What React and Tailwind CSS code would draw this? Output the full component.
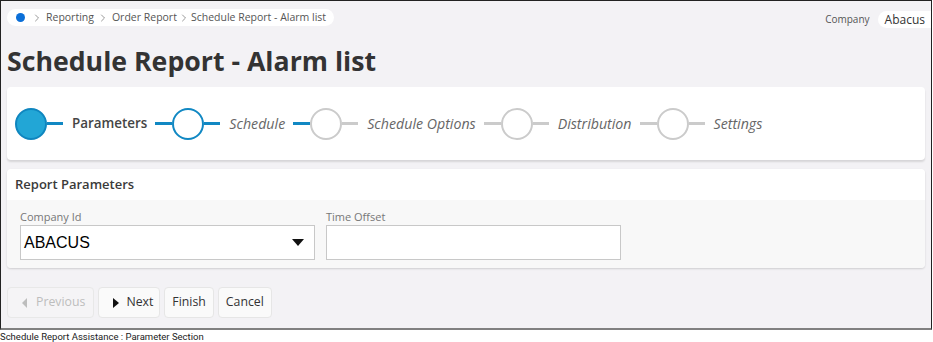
import { ChevronRight } from 'lucide-react';

const Step = ({ label, state, last }) => {
    const done = state === 'active';
    const blue = state !== 'todo';
    return (
        <div className="flex items-center">
            <div
                className={
                    done
                        ? 'w-8 h-8 rounded-full bg-[#22a6d6] border-2 border-[#0f86bf]'
                        : blue
                        ? 'w-8 h-8 rounded-full bg-white border-2 border-[#1188c3]'
                        : 'w-8 h-8 rounded-full bg-white border-2 border-[#cbcbcb]'
                }
            />
            <div className={blue ? 'w-4 h-[3px] bg-[#1188c3]' : 'w-4 h-[3px] bg-[#cbcbcb]'} />
            <span
                className={
                    done
                        ? 'ml-[9px] text-[13.4px] font-semibold text-[#454545]'
                        : 'ml-[9px] text-[14.2px] italic text-[#666]'
                }
            >
                {label}
            </span>
            {!last && (
                <div
                    className={
                        state === 'todo' || label === 'Schedule Options'
                            ? 'ml-2 w-[17px] h-[3px] bg-[#cbcbcb]'
                            : 'ml-2 w-[17px] h-[3px] bg-[#1188c3]'
                    }
                />
            )}
        </div>
    );
};

const Btn = ({ children, disabled, icon }) => (
    <button
        className={
            (icon ? 'pl-[14px] pr-[6px] gap-[7px] ' : 'px-[7px] ') +
            (disabled
                ? 'h-[31px] flex items-center text-[12.3px] text-[#bdbdbd] bg-[#f5f4f6] border border-[#e8e8e8] rounded'
                : 'h-[31px] flex items-center text-[12.3px] text-[#333] bg-[#fafafa] border border-[#e6e6e6] rounded')
        }
    >
        {children}
    </button>
);

export default function App() {
    return (
        <div className="w-[933px] h-[342px] bg-white font-['Open_Sans',sans-serif]">
            <div className="w-[932px] h-[330px] border border-[#222] border-b-2 border-b-[#808080] bg-[#f3f2f5] px-[6px] pt-[6px]">
                <div className="flex items-center justify-between">
                    <div className="h-[17px] bg-white rounded-full flex items-center pl-[9px] pr-[8px] whitespace-nowrap text-[10.5px] text-[#555]">
                        <span className="w-[9px] h-[9px] rounded-full bg-[#0b6fd8]" />
                        <ChevronRight className="w-3 h-3 ml-[6px] mr-[3px] text-[#777]" strokeWidth={1.5} />
                        <span>Reporting</span>
                        <ChevronRight className="w-3 h-3 mx-[3px] text-[#777]" strokeWidth={1.5} />
                        <span>Order Report</span>
                        <ChevronRight className="w-3 h-3 mx-[1px] text-[#777]" strokeWidth={1.5} />
                        <span>Schedule Report - Alarm list</span>
                    </div>
                    <div className="flex items-center -mr-[6px] pt-[4px]">
                        <span className="text-[10px] text-[#555] mr-2">Company</span>
                        <span className="bg-white rounded-l-full pl-[7px] pr-[6px] h-[17px] flex items-center text-[12px] text-[#333]">Abacus</span>
                    </div>
                </div>
                <h1 className="mt-[17px] text-[26.7px] leading-[32px] font-bold text-[#333]">
                    Schedule Report - Alarm list
                </h1>
                <div className="mt-[10px] h-[73px] bg-white rounded shadow-[0_2px_2px_rgba(0,0,0,0.12)] flex items-center pl-2">
                    <Step label="Parameters" state="active" />
                    <Step label="Schedule" state="current" />
                    <Step label="Schedule Options" state="todo" />
                    <Step label="Distribution" state="todo" />
                    <Step label="Settings" state="todo" last />
                </div>
                <div className="mt-[9px] rounded shadow-[0_1px_2px_rgba(0,0,0,0.15)] overflow-hidden">
                    <div className="h-[31px] bg-white flex items-center pl-2 text-[13px] font-semibold text-[#3a3a3a]">
                        Report Parameters
                    </div>
                    <div className="h-[68px] bg-[#f8f8f8] pl-[13px] pt-[9px] flex gap-[11px]">
                        <div className="flex flex-col">
                            <span className="text-[11px] leading-[16px] text-[#777]">Company Id</span>
                            <div className="w-[295px] h-[35px] bg-white border border-[#c8c8c8] flex items-center justify-between pl-[3px] pr-[10px]">
                                <span className="font-['Liberation_Sans',sans-serif] text-[16px] text-black">ABACUS</span>
                                <svg width="12" height="7" viewBox="0 0 12 7">
                                    <path d="M0 0 L12 0 L6 7 Z" fill="#111" />
                                </svg>
                            </div>
                        </div>
                        <div className="flex flex-col">
                            <span className="text-[11px] leading-[16px] text-[#777]">Time Offset</span>
                            <div className="w-[295px] h-[35px] bg-white border border-[#c8c8c8]" />
                        </div>
                    </div>
                </div>
                <div className="mt-[19px] flex gap-1">
                    <Btn disabled icon>
                        <svg width="5" height="10" viewBox="0 0 5 10">
                            <path d="M5 0 L0 5 L5 10 Z" fill="#bdbdbd" />
                        </svg>
                        <span className="ml-[2px] mr-[2px]">Previous</span>
                    </Btn>
                    <Btn icon>
                        <svg width="6" height="10" viewBox="0 0 6 10">
                            <path d="M0 0 L6 5 L0 10 Z" fill="#111" />
                        </svg>
                        Next
                    </Btn>
                    <Btn>Finish</Btn>
                    <Btn>Cancel</Btn>
                </div>
            </div>
            <div className="font-['Roboto',sans-serif] text-[9.5px] leading-[11px] text-[#222] pt-[1px]">
                Schedule Report Assistance : Parameter Section
            </div>
        </div>
    );
}
